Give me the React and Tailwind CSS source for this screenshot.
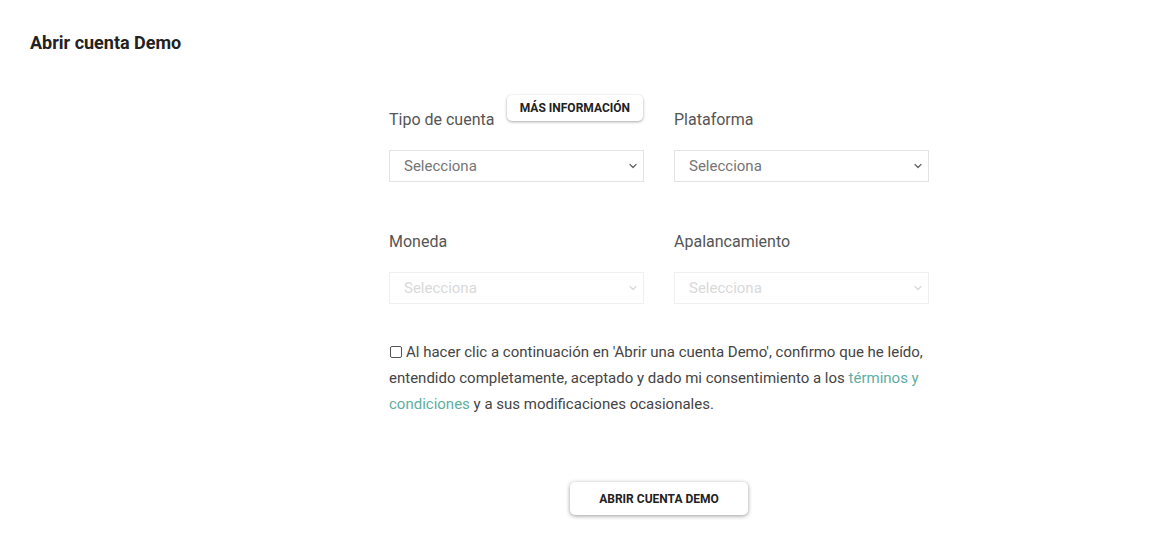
import {ChevronDown} from "lucide-react";

function SelectBox({disabled}) {
  return (
    <div className="relative">
      <select
        disabled={disabled}
        defaultValue=""
        className={`w-full h-[32px] appearance-none bg-white border pl-[14px] pr-8 text-[15px] outline-none ${
          disabled
            ? "border-[#f0f0f0] text-[#d9d9d9]"
            : "border-[#e3e3e3] text-[#757575]"
        }`}
      >
        <option value="">Selecciona</option>
      </select>
      <ChevronDown
        size={12}
        strokeWidth={2.5}
        className={`absolute right-[5px] top-[10px] pointer-events-none ${
          disabled ? "text-[#d9d9d9]" : "text-[#666]"
        }`}
      />
    </div>
  );
}

function Field({label, disabled, extra}) {
  return (
    <div className="flex flex-col">
      <div className="flex items-start justify-between h-[55px]">
        <span className="mt-[13px] leading-6 text-[16px] text-[#555]">{label}</span>
        {extra}
      </div>
      <SelectBox disabled={disabled} />
    </div>
  );
}

export default function App() {
  return (
    <div
      className="min-h-[557px] bg-white pt-[31px] pl-[30px]"
      style={{fontFamily: "Roboto, 'Liberation Sans', sans-serif"}}
    >
      <h1 className="text-[18px] leading-6 font-bold text-[#222]">Abrir cuenta Demo</h1>

      <div className="ml-[359px] w-[540px] mt-[40px]">
        <div className="grid grid-cols-2 gap-x-[30px] gap-y-[35px]">
          <Field
            label="Tipo de cuenta"
            extra={
              <button className="h-[26px] mr-[1px] px-[13px] bg-white rounded-[5px] shadow-[0_1px_3px_rgba(0,0,0,0.35)] text-[12px] font-bold text-[#222]">
                MÁS INFORMACIÓN
              </button>
            }
          />
          <Field label="Plataforma" />
          <Field label="Moneda" disabled />
          <Field label="Apalancamiento" disabled />
        </div>

        <p className="mt-[35px] text-[15px] leading-[26px] text-[#444]">
          <input
            type="checkbox"
            className="w-[12px] h-[12px] mr-[4px] ml-[1px] align-[-1px] border border-[#555] rounded-[2px] appearance-none bg-white"
          />
          Al hacer clic a continuación en 'Abrir una cuenta Demo', confirmo que he leído,
          entendido completamente, aceptado y dado mi consentimiento a los{" "}
          <a className="text-[#5fae9f]">términos y condiciones</a> y a sus modificaciones
          ocasionales.
        </p>

        <div className="flex justify-center mt-[65px]">
          <button className="w-[178px] h-[33px] bg-white rounded-[5px] shadow-[0_1px_4px_rgba(0,0,0,0.4)] text-[12px] font-bold text-[#222]">
            ABRIR CUENTA DEMO
          </button>
        </div>
      </div>
    </div>
  );
}
